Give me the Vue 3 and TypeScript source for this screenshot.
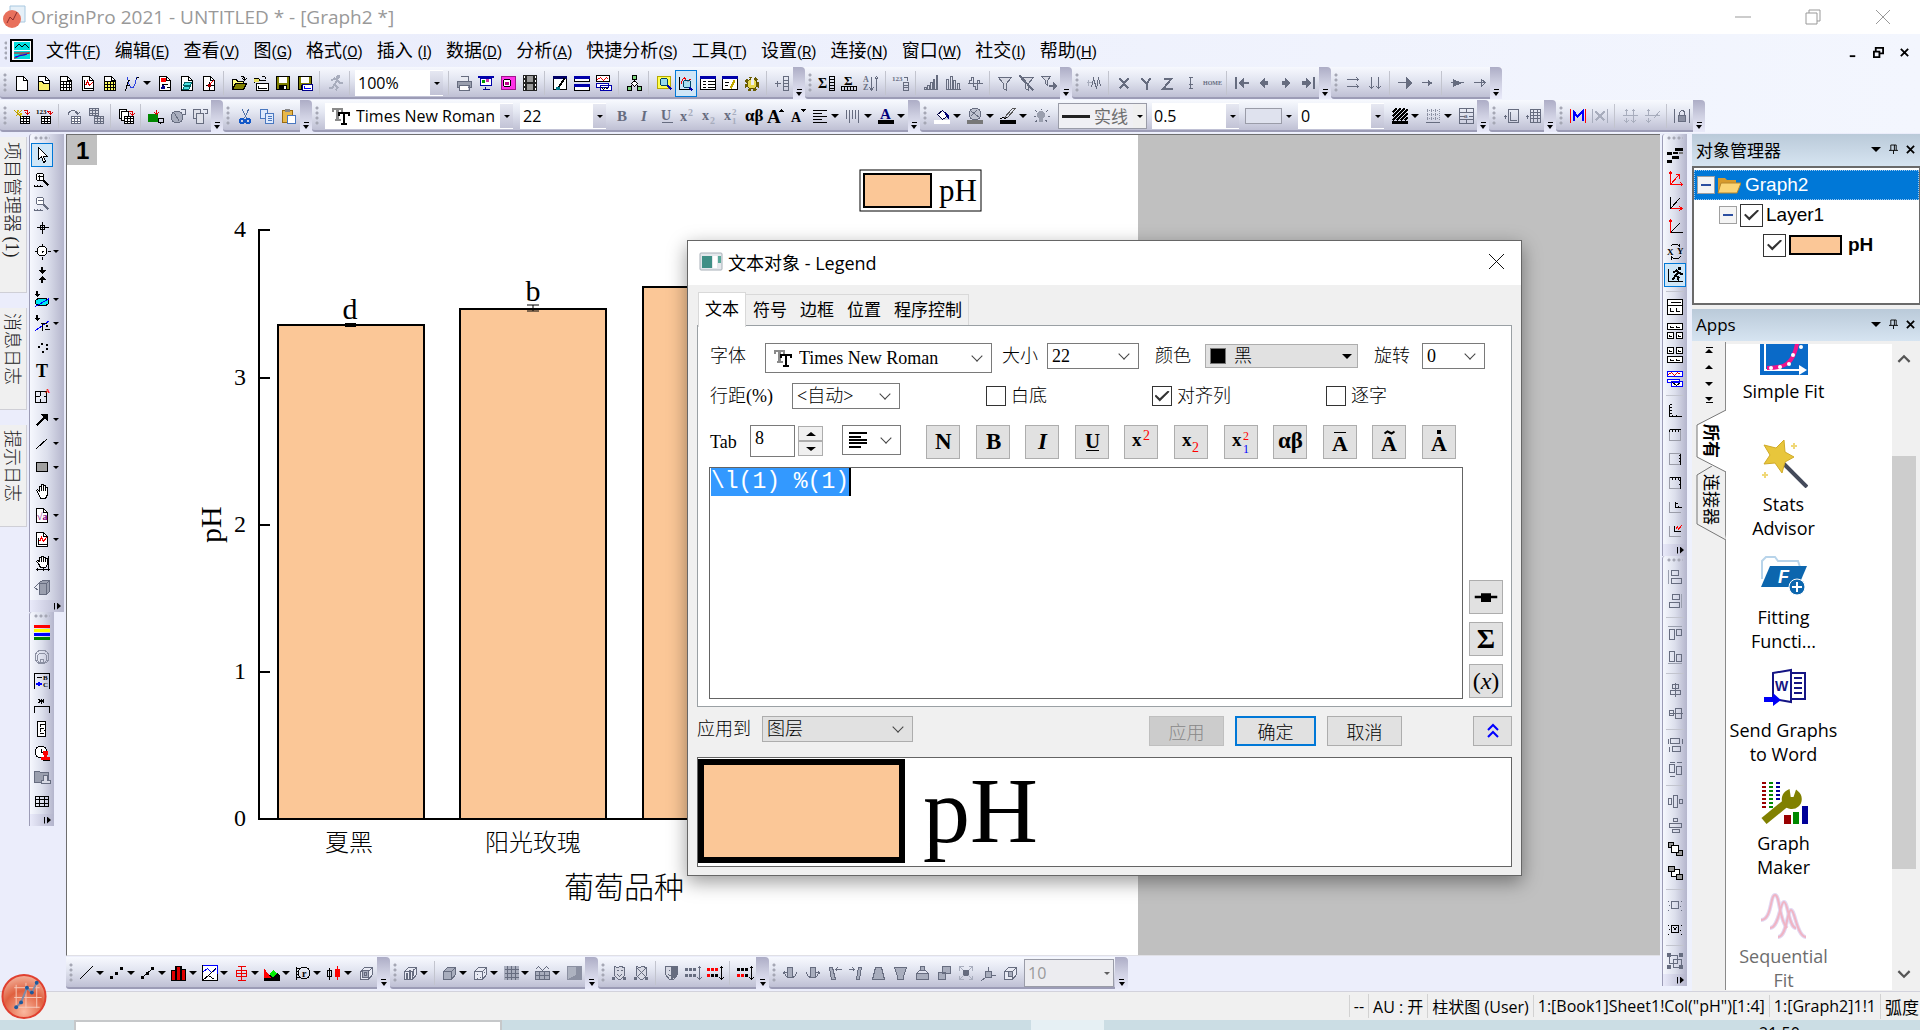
<script setup lang="ts">
import { onMounted, ref } from 'vue'

interface Item {
  kind: 'icon' | 'sep' | 'combo'
  id: string
  drop: boolean
  on: boolean
}

const G = '#666c7f'
const L = '#a8adbd'

const s = (d: string, c = '#000', w = 1) =>
  `<path d="${d}" fill="none" stroke="${c}" stroke-width="${w}" transform="translate(.5 .5)"/>`
const f = (d: string, c = '#000') => `<path d="${d}" fill="${c}"/>`
const b = (d: string, c: string, k = '#000') =>
  `<path d="${d}" fill="${c}" stroke="${k}" transform="translate(.5 .5)"/>`
const t = (x: number, y: number, size: number, text: string, c = '#000', extra = 'font-weight="bold"') =>
  `<text x="${x}" y="${y}" font-size="${size}" fill="${c}" font-family="Liberation Serif, serif" ${extra}>${text}</text>`

const page = b('M2 1h7l4 4v10H2z', '#fff') + s('M9 1v4h4')
const cube = b('M2 6l4-4h8v7l-4 5H2z', L, G) + s('M2 6h8v8M10 6l4-4', G)
const cubeOutline = b('M2 6l4-4h8v7l-4 5H2z', '#e8eaf4', G) + s('M2 6h8v8M10 6l4-4', G)
const sheet = (x: number, y: number, c: string, bg = '#fff') =>
  b(`M${x} ${y}h9v7h-9z`, bg, c) + s(`M${x} ${y + 2}h9M${x} ${y + 5}h9M${x + 3} ${y}v7M${x + 6} ${y}v7`, c)
const magnify = (c: string) =>
  `<circle cx="6" cy="6" r="4" fill="#fff" stroke="${c}"/>` + s('M9 9l5 5', c, 2) + s('M0 15v-2M3 15v-2M6 15v-2M0 15h8', c)
const floppy = b('M1 1h13v13H1z', '#808000') + f('M4 2h8v6H4z', '#fff') + f('M4 10h8v5H4z') + f('M9 11h2v3H9z', '#fff')
const folderOpen = b('M1 13V4h4l1 2h6v2', '#ffff80') + b('M1 14l3-6h11l-3 6z', '#808000') + s('M9 2c2-2 4-1 4 2M11 3l2 2 2-2')
const bars = (c: string) => s('M0 14h14M1 14v-2h2v2M4 14v-4h2v4M7 14V7h2v7M10 14V4h1v10M13 14V0h1v14', c)
const align = (c: string) => f('M1 2h14v1H1zM1 5h9v1H1zM1 8h14v1H1zM1 11h9v1H1zM1 14h14v1H1z', c)
const boxAxes = b('M0 0h15v15H0z', '#fff') + s('M3 3h10M3 8v4h3M9 8v4h3M0 6h15')
const panels = (up: boolean) =>
  up
    ? b('M0 0h15v6H0z', '#fff') + s('M3 2v2h3M9 2v2h3') + b('M0 9h6v6H0zM9 9h6v6H9z', '#fff') + s('M2 11v2h2M11 11v2h2')
    : b('M0 0h6v6H0zM9 0h6v6H9z', '#fff') + s('M2 2v2h2M11 2v2h2') + b('M0 9h15v6H0z', '#fff') + s('M3 11v2h3M9 11v2h3')
const axes = (solid: string) => s('M2 2h11v11H2z', '#9a9ca8') + s(solid, '#000', 1)
const runner = (c: string) => s('M4 5l3-2 3 2-3 4 3 3-2 3M7 9l-2 3H1M10 5l2 2h3', c, 2) + `<circle cx="11" cy="2" r="2" fill="${c}"/>`

const icons: Record<string, string> = {
  new: page,
  newfolder: page + b('M2 6h4l1 2h6v7H2z', '#f8ee6a'),
  newbook: page + s('M2 6h11M2 9h11M2 12h11M5 6v9M8 6v9M11 6v9'),
  newgraph: page + s('M4 4v9h8') + s('M5 10l2-4 2 4 3-3', '#e00000'),
  newmatrix: page + b('M2 6h11v9H2z', '#ffff60') + s('M2 9h11M2 12h11M5 6v9M8 6v9M11 6v9'),
  func: s('M3 2c2 14 7 14 9 0', '#2a3fe0') + s('M0 15c3 0 2-10 5-10M1 10h4M12 3l3-2'),
  layout: page + f('M4 3h5v4H4z', '#f00') + f('M5 9h2v2H5zM4 12l2-2 2 2v2H4z', '#008') + s('M4 9h6M9 12h3'),
  notes: page + b('M5 7h7l-1 3H4zM5 11h6l-2 3H3z', '#4ce0e0', '#066'),
  newfit: page + s('M4 10h8M8 6v8') + s('M8 9l4-4', '#f00') + f('M7 9h3v3H7z', '#a00'),
  open: folderOpen,
  opent: s('M1 7V3h4l1 2h6') + s('M9 1c2-1 3 0 3 2') + b('M3 8h12v7H3z', '#fff') + s('M5 10v3h8') + f('M1 4h5v3H1z', '#e8e060'),
  save: floppy,
  savet: floppy + b('M5 9h10v6H5z', '#fff', '#008') + s('M7 10v3h6', '#00f'),
  run: runner(L),
  print: f('M4 1h8v5H4z', '#e8eaf2') + b('M1 6h14v6H1z', '#9a9fae', G) + f('M4 10h8v5H4z', '#fff') + s('M4 1h8v4M3 10h10v5H3z', G),
  slide: f('M0 1h16v2H0z', '#00a') + b('M2 3h11v7H2z', '#fff', '#00a') + f('M4 5h3v3H4z', '#090') + f('M8 4h3v3H8z', '#c3a') + s('M7 11v2M4 14h7', '#008'),
  video: b('M1 1h14v13H1z', '#ff32e8', '#a0148c') + '<circle cx="7" cy="8" r="4" fill="#fff" stroke="#000"/>' + f('M5 7h4v3H5z', '#c0008c'),
  film: f('M1 0h14v16H1z', '#222') + f('M5 1h6v6H5zM5 9h6v6H5z', '#999') + f('M2 1h1v2H2zM2 5h1v2H2zM2 9h1v2H2zM2 13h1v2H2zM13 1h1v2h-1zM13 5h1v2h-1zM13 9h1v2h-1zM13 13h1v2h-1z', '#fff'),
  pen: b('M1 2h13v12H1z', '#fff') + f('M1 1h14v3H1z', '#006') + s('M12 3l-6 9', '#000', 2) + f('M4 12h4v3H4z', '#078'),
  rows: b('M0 1h15v5H0zM0 9h15v6H0z', '#fff') + f('M0 1h16v3H0zM0 9h16v3H0z', '#00a'),
  cascade: b('M0 0h13v6H0z', '#fff') + s('M1 4l3-2 3 3 3-3 2 2', '#e00') + b('M0 8h12v4H0zM4 10h11v5H4z', '#fff', '#00a') + s('M5 12l2 2 2-2 3 2'),
  org: b('M6 0h4v4H6zM1 11h4v4H1zM11 11h4v4h-4z', '#7ed67e') + b('M8 5l3 3-3 3-3-3z', '#fff') + s('M8 3v3M6 9l-3 3M10 9l3 3'),
  magbook: b('M1 1h13v12H1z', '#ffff50', '#b5a800') + '<circle cx="8" cy="7" r="4" fill="#9de" stroke="#046"/>' + s('M11 10l4 4', '#00a', 2),
  maggraph: s('M1 1v13h13') + s('M3 9c1-8 3-8 5-4s3-3 5-1', '#e00') + '<circle cx="9" cy="9" r="4" fill="#9de" fill-opacity=".7" stroke="#046"/>' + s('M11 12l3 3', '#00a', 2),
  list: b('M0 1h15v13H0z', '#fff') + f('M0 1h16v3H0z', '#00a') + s('M2 6h3M7 6h7M2 9h3M7 9h7M2 12h3M7 12h7'),
  script: b('M0 1h15v13H0z', '#fff') + f('M0 1h16v3H0z', '#00a') + s('M2 7h4M2 10h3') + s('M12 5l-4 8', '#c0a800', 2),
  gear: '<circle cx="8" cy="9" r="5" fill="#e8d850" stroke="#554a00"/><circle cx="8" cy="9" r="6" fill="none" stroke="#6a5c00" stroke-width="3" stroke-dasharray="3 2"/>' + f('M7 3h3v7H7z', '#eee'),
  addcol: s('M0 8h6M3 5v6', G) + s('M9 1h5v14H9zM9 5h5M9 8h5M9 11h5', G),
  sumcol: t(-1, 13, 14, 'Σ') + s('M10 1h5v14h-5zM10 4h5M10 7h5M10 10h5M10 13h5'),
  sumrow: t(3, 10, 13, 'Σ') + s('M0 11h15v4H0zM3 11v4M6 11v4M9 11v4M12 11v4'),
  sort: t(0, 7, 8, 'A', G) + t(0, 15, 8, 'Z', G) + s('M8 1v13M6 12l2 3 2-3M13 15V2M11 4l2-3 2 3', G),
  rank: t(-1, 6, 7, '123', G) + s('M10 2h4v3M10 7h5v8h-5zM10 10h5M10 12h5', G),
  bar1: bars(G),
  bar2: s('M0 14h15M1 14V4h2v10M5 14V1h2v13M8 14V5h2v9M12 14V8h2v6', G),
  bar3: s('M0 8h15M2 8V5h2V2h2v9h2v3h2V5h2v3', G),
  filter: b('M1 2h13L9 8v7l-3-2V8z', '#d7d9e4', G),
  filterx: b('M1 2h13L9 8v7l-3-2V8z', '#d7d9e4', G) + s('M0 0l14 15', G, 2),
  filterr: b('M0 1h9L6 5v5L4 8V5z', '#d7d9e4', G) + f('M8 10h4V7l4 4-4 4v-3H8z', G),
  peak: s('M0 7h5M2 4v6', L) + s('M5 12l2-9 3 10 2-11 2 9', G),
  X: s('M3 3l9 10M12 3L3 13', G, 2),
  Y: s('M3 3l5 5 4-5M8 8v6', G, 2),
  Z: s('M3 3h8L3 13h9', G, 2),
  I: s('M8 2v11M6 2h4M6 13h4M6 9h4', G),
  home: t(-1, 10, 6, 'HOME', G),
  first: f('M1 2h2v12H1zM10 3v10L4 8z', G) + f('M10 7h5v2h-5z', G),
  prev: f('M9 3v10L3 8zM9 6h3v4H9z', G),
  next: f('M7 3v10l6-5zM4 6h3v4H4z', G),
  last: f('M6 3v10l6-5zM13 2h2v12h-2zM2 6h4v4H2z', G),
  hh: s('M1 4h12M11 2l2 2-2 2M1 11h12M11 9l2 2-2 2', G),
  vv: s('M4 1v12M2 11l2 2 2-2M11 1v12M9 11l2 2 2-2', G),
  ar1: s('M0 7h10', G, 1) + f('M9 2v12l6-6z', G),
  ar2: s('M2 7h9', G) + f('M9 5v6l5-3z', G),
  ar3: s('M1 7h13', G) + f('M4 4v8l9-4z', G),
  ar4: s('M2 7h12M10 4v7l4-4z', G),
  wand: sheet(6, 8, '#000') + s('M1 8l6-6M0 2l8 7', '#c0a000') + f('M3 2h2v2H3zM6 5h2v2H6z', '#d8c000') + s('M9 2h4v3M11 4l2 2 2-2', '#d00'),
  imp: sheet(5, 8, '#000') + t(0, 6, 7, '123') + s('M10 3h4v3M12 4l2 2 2-2', '#d00'),
  re1: sheet(5, 8, G) + s('M2 6c0-5 9-5 9 0M9 4l2 2 2-2', G),
  re2: sheet(1, 0, G, '#d7d9e4') + sheet(6, 8, G, '#d7d9e4'),
  batch: b('M1 1h7v9H1z', '#fff') + b('M3 3h7v9H3z', '#fff') + sheet(6, 8, '#000') + s('M10 3h4v4M12 5l2 2 2-2', '#d00'),
  plug: f('M0 6h10v8H0z', '#080') + s('M8 1v5M6 4l2 2 2-2', '#d00') + s('M10 10h5v4h-5zM12 14v1'),
  globe2: '<circle cx="7" cy="9" r="6" fill="#a8adbd" stroke="#666c7f"/>' + s('M10 1h5v5h-3M4 5l5 8', G),
  pages: b('M1 1h7v9H1z', '#dfe1ea', G) + b('M4 5h7v10H4z', '#dfe1ea', G) + s('M10 1h5v4h-3', G),
  cut: s('M5 1l4 9M11 1L7 10', '#4b6ea8') + '<circle cx="5" cy="13" r="2" fill="none" stroke="#1459c8" stroke-width="2"/><circle cx="11" cy="13" r="2" fill="none" stroke="#1459c8" stroke-width="2"/>',
  copy: b('M1 1h7v9H1z', '#dfeafc', '#4a78c0') + b('M6 5h8v10H6z', '#dfeafc', '#4a78c0') + s('M8 8h4M8 10h4M8 12h4', '#4a78c0'),
  paste: b('M1 2h10v12H1z', '#e8b84a', '#9a6b10') + f('M4 1h5v3H4z', '#888') + b('M6 7h8v8H6z', '#fff', '#4a78c0'),
  B: t(3, 13, 15, 'B', G),
  It: t(5, 13, 15, 'I', G, 'font-weight="bold" font-style="italic"'),
  U: t(3, 12, 14, 'U', G) + s('M3 14h11', G),
  sup: t(0, 13, 14, 'x', G) + t(8, 8, 10, '2', L),
  sub: t(0, 12, 14, 'x', G) + t(8, 16, 10, '2', L),
  supsub: t(0, 12, 14, 'x', G) + t(8, 7, 9, '2', L) + t(8, 16, 9, '1', L),
  ab: t(-1, 13, 17, 'αβ'),
  Abig: t(-1, 15, 19, 'A') + f('M11 4h5l-3-3z'),
  Asmall: t(1, 14, 14, 'A') + f('M11 1h5l-3 3z'),
  align: align('#000'),
  vert: s('M1 1v9M4 1v13M7 1v9M10 1v9M13 1v13', G),
  Acol: t(2, 11, 15, 'A', '#00007a') + f('M0 12h16v4H0z'),
  bucket: b('M3 6l5-4 6 5-6 4z', '#fff', '#000040') + f('M9 3l6 4v5z', '#00007a') + f('M0 12h16v4H0z', '#fff'),
  globe: '<circle cx="8" cy="6" r="6" fill="#bfc3d0" stroke="#666c7f"/>' + s('M4 3l8 6M3 8l6-6', G) + f('M0 12h16v4H0z', '#777'),
  linec: s('M4 9l8-9 3 0-8 9z', '#555') + s('M0 10c4-2 3 1 7-1') + f('M0 12h16v4H0z'),
  bulb: '<circle cx="8" cy="7" r="4" fill="#9a9fae"/>' + f('M6 10h4v4H6z', '#9a9fae') + s('M8 0v1M2 2l2 2M14 2l-2 2M0 8h2M14 8h2M2 13l2-1M14 13l-2-1', G),
  hatch: s('M0 4l4-4M0 8L8 0M0 12L12 0M4 12L15 1M8 12l7-7M12 12l3-3', '#000', 2) + f('M0 13h16v3H0z'),
  gridd: '<path d="M2 2h12M2 6h12M2 10h12M2 1v11M6 1v11M10 1v11M14 1v11" stroke="#8b90a2" stroke-dasharray="1 1" fill="none"/>' + f('M1 14h14v1H1z', G),
  cellm: s('M1 0h14v15H1zM1 4h14M1 11h14M8 0v4M8 11v4M1 8h5M10 8h5', G) + t(6, 10, 7, 'a', G),
  addaxes: s('M0 8h3M2 6v4M5 1h10v13H5zM7 3v9h6', G),
  addgrid: s('M0 8h3M2 6v4M5 1h10v13H5zM5 4h10M5 7h10M5 10h10M8 1v13M12 1v13', G),
  M: f('M0 1h1v14H0zM15 1h1v14h-1z', '#f00') + s('M3 12V3l4 5 5-5v9', '#00f', 2),
  Mx: f('M0 1h1v14H0zM15 1h1v14h-1z', L) + s('M3 3l9 9M12 3l-9 9', L, 2),
  mv1: s('M4 1v5M2 3l2-2 2 2M4 9v5M2 12l2 2 2-2M0 7h15M11 1v13M9 3l2-2 2 2M9 12l2 2 2-2', L),
  mv2: s('M4 1v5M2 3l2-2 2 2M4 9v5M2 12l2 2 2-2M0 7h15M9 10l6-7', L),
  lock: f('M0 1h1v14H0zM15 1h1v14h-1z', G) + b('M4 7h7v6H4z', '#8b90a2', G) + s('M5 7V4l2-2h2l1 2v3', G),
  arrow: b('M4 0v12l3-3 2 6 2-1-2-5h4z', '#fff'),
  zoomin: magnify('#000') + s('M3 5h5M5 3v5'),
  zoomout: magnify(G) + s('M3 5h5', G),
  cross: s('M8 2v12M2 8h12M6 6h4v4H6z'),
  target: '<circle cx="8" cy="8" r="5" fill="#fff" stroke="#000"/>' + s('M8 0v3M8 13v3M0 8h3M13 8h3M8 7v2M7 8h2'),
  vpair: f('M7 0h2v3h3L8 7 4 3h3zM7 16h2v-3h3L8 9l-4 4h3z'),
  mask: '<ellipse cx="8" cy="11" rx="7" ry="4" fill="#00e6f0" stroke="#000"/>' + s('M1 15L15 7', '#00f') + f('M2 0h2v3h2L3 6 0 3h2z'),
  mask2: s('M1 15L15 5', '#00f') + s('M6 8h6M8 8v7M10 14h5') + f('M2 0h2v3h2L3 6 0 3h2zM12 10h2v2h-2z'),
  dots: f('M4 7h2v2H4zM7 4h2v2H7zM12 5h2v2h-2zM12 9h2v2h-2zM8 12h2v2H8z'),
  T: t(2, 14, 18, 'T'),
  zoomT: s('M1 4h11v11H1zM1 9h4M9 9h3M6 4v4M6 11v4') + t(11, 6, 7, 'A', '#f00'),
  arrl: s('M2 14L11 5', '#000', 2) + f('M6 3h8v8z'),
  line: s('M2 13L13 3'),
  rect: b('M2 3h11v9H2z', '#a0a0a0'),
  hand: b('M4 10L2 7l1-1 2 2V3h2v4-6h2v6-5h2v5-3h2v7l-2 4H6z', '#fff'),
  eq: page + t(3, 13, 10, '√a', '#800080'),
  miniG: page + s('M4 6v7h8') + s('M5 10l2-4 2 4 3-4', '#f00'),
  handx: b('M4 8L2 6l1-1 2 1V2h2v4-5h2v5-4h2v4-3h2v6l-2 3H6z', '#fff') + s('M1 14h14M14 0v15M3 12v3M9 12v3'),
  cubeg: b('M5 3l3-2h7v11l-3 3H5z', '#9a9fae', G) + s('M5 4h7v11M12 4l3-3M4 4L0 8l4 3', G),
  stripes: f('M0 0h16v3H0z', '#f00') + f('M0 4h16v3H0z', '#ff0') + f('M0 8h16v3H0z', '#00f') + f('M0 12h16v3H0z', '#008000'),
  rings: '<g fill="none" stroke="#8b90a2"><circle cx="8" cy="8" r="7"/><circle cx="8" cy="9" r="5"/><circle cx="8" cy="12" r="2"/></g>',
  legend: s('M0 15V0h15v15M2 4h5') + t(9, 7, 7, 'B') + t(9, 14, 7, 'C') + f('M2 10h6v2H2zM4 9h2v4H4z', '#00f'),
  star: s('M0 15V9h15v6M7 1v5M4 2l6 3M10 2L4 5'),
  scale: b('M3 0h8v15H3z', '#fff') + s('M5 3h4M6 2v3M5 7h4M6 6v4M5 12h4M9 3h2M9 9h2'),
  stamp: '<circle cx="7" cy="7" r="6" fill="#fff" stroke="#000"/>' + s('M7 3v4h3') + f('M9 6h5v4h-1v2h3v3H7v-3h3v-2H9z', '#f00') + s('M8 15h7'),
  stampg: b('M0 2h5l1 1h8v10H0z', '#9a9fae', G) + b('M9 6h4v5h3v3H7v-3h2z', '#d7d9e4', G),
  table: s('M1 3h13v10H1zM1 6h13M1 10h13M5 3v10M10 3v10'),
  black: f('M8 1h8v3H8zM0 5h5v3H0zM6 5h5v2H6zM5 9h7v3H5zM0 13h5v3H0z') + f('M12 5h4v2h-4z', '#777'),
  axxy: s('M3 0v13h12M1 3l2-3 2 3M13 11l2 2-2 2M3 13L11 4M8 3h4v4', '#f00'),
  axx: s('M3 1v12M3 13L12 3') + s('M3 13h12M12 11l3 2-3 2', '#f00'),
  axy: s('M3 13h12M3 13L12 4') + s('M3 13V0M1 3l2-3 2 3', '#f00'),
  swap: t(0, 12, 9, 'X') + t(10, 11, 9, 'Y') + s('M3 3c2-3 7-3 9 0V0M13 13c-2 3-7 3-9 0v3'),
  runax: s('M1 1v13h14') + s('M6 5l3-2 2 2-3 3 3 2-1 3M8 8l-2 3H4M11 5l2 1h2', '#000', 2) + f('M11 0h3v3h-3z'),
  lay1: boxAxes,
  lay2: panels(true),
  lay3: panels(false),
  lay4: b('M0 0h15v5H0z', '#fff', '#00f') + s('M1 3l3-2 3 3 3-3 3 2', '#e00') + b('M0 8h12v3H0zM4 10h11v5H4z', '#fff', '#00f') + s('M5 11l4 3 4-3'),
  axL: s('M2 1v12h12M2 1h2M2 4h2M2 7h2M2 10h2M5 13v-2M9 13v-2'),
  axT: axes('M2 2h11M2 2v2M5 2v2M8 2v2M11 2v2'),
  axR: axes('M13 2v11M11 4h2M11 7h2M11 10h2'),
  axA: axes('M2 2h11v11M5 2v2M8 2v2M11 2v2M11 5h2M11 9h2'),
  axI: s('M2 2v11h11', '#9a9ca8') + s('M8 2v6h6M8 4h2M11 8V6'),
  axJ: s('M2 2v11h11', '#9a9ca8') + s('M7 2v6h6') + s('M8 6l2-3 1 3 3-4', '#f00'),
  alL: '<path d="M1 1h1v14h-1z" fill="#9a9fae"/>' + s('M4 1h7v5H4zM4 9h10v5H4z', G),
  alR: '<path d="M14 1h1v14h-1z" fill="#9a9fae"/>' + s('M5 1h7v5H5zM2 9h10v5H2z', G),
  alT: '<path d="M1 1h14v1H1z" fill="#9a9fae"/>' + s('M2 4h5v10H2zM9 4h5v6H9z', G),
  alB: '<path d="M1 14h14v1H1z" fill="#9a9fae"/>' + s('M2 2h5v10H2zM9 5h5v7H9z', G),
  cV: s('M5 3h6v4H5zM3 9h10v4H3zM8 1v14', G),
  cH: s('M2 5h4v5H2zM8 3h6v10H8zM1 8h14', G),
  szH: s('M3 1h9v5H3zM5 9h8v5H5zM1 1v5M15 1v5M2 9v5', G),
  szV: s('M2 3h5v8H2zM9 5h5v8H9zM2 1h5M9 1h5M2 15h5', G),
  dH: s('M1 5h3v6H1zM6 2h4v12H6zM12 6h3v4h-3z', G),
  dV: s('M6 1h4v3H6zM2 6h12v4H2zM5 12h7v3H5z', G),
  front: b('M1 1h5v5H1zM9 9h6v5H9z', '#999') + b('M4 4h7v7H4z', '#fff'),
  back: b('M4 4h8v7H4z', '#fff') + b('M1 1h6v5H1zM9 9h6v5H9z', '#999'),
  gr1: s('M4 4h7v7H4zM1 3v1M2 7v1M1 12v1M14 3v1M13 8v1M14 12v1', G),
  gr2: s('M4 4h7v7H4zM6 6l3 3M9 6L6 9M1 3v1M2 7v1M1 12v1M14 3v1M13 8v1M14 12v1'),
  grp: s('M2 2h8v8H2zM6 6h8v8H6z', G) + f('M0 0h4v4H0zM12 0h4v4h-4zM0 12h4v4H0zM12 12h4v4h-4z', G),
  pline: s('M1 14L14 1'),
  pscat: f('M1 11h3v3H1zM6 7h3v3H6zM11 2h3v3h-3z'),
  plsc: f('M1 11h3v3H1zM6 7h3v3H6zM11 2h3v3h-3z') + s('M2 12L12 3'),
  pbar: f('M0 5h6v11H0zM4 1h7v15H4zM9 4h6v12H9z') + f('M1 6h3v9H1zM6 2h3v13H6zM11 5h3v10h-3z', '#e00000'),
  pmulti: b('M0 0h15v15H0z', '#fff', '#000') + s('M0 0h15v8M1 6l4-3 4 4 5-4', '#00f') + s('M1 14l5-4 6 4M6 10L13 3'),
  pbox: s('M8 1v14M4 1h8M4 15h8M3 5h10v6H3zM3 8h10', '#e00'),
  parea: f('M0 4l5 6 5-4 6 4v6H0z') + f('M0 3l7 10H0z', '#f00') + f('M5 9l4-4 4 4-4 3z', '#0e0'),
  pr: s('M1 1v13M1 3h2M1 6h2M1 9h2M1 12h2') + '<circle cx="9" cy="8" r="6" fill="none" stroke="#000"/>' + t(7, 12, 10, 'r'),
  pcand: s('M3 2v12M1 5h4v6H1z') + f('M9 4h5v8H9zM11 1h1v14h-1z', '#f00'),
  p3d: cubeOutline + b('M4 5h6v7H4z', L, G) + s('M6 7h2v3H6z', G),
  c3a: cubeOutline + f('M4 8h2v6H4zM7 5h2v9H7zM11 4h1v7h-1z', G),
  c3b: cube,
  c3c: cubeOutline + s('M5 8v1M8 11v1M12 6v1M5 12v1', G),
  cgrid: f('M1 1h15v14H1z', L) + s('M1 4h14M1 8h14M1 12h14M4 0v14M8 0v14M12 0v14', G),
  cwave: f('M1 6h15v9H1z', L) + s('M1 4l3-3 4 4 4-4 3 3M1 6h14v8H1zM1 10h14M5 6v8M10 6v8', G),
  cfill: f('M1 1h15v14H1z', '#8b90a2') + f('M2 2h8v8L2 14z', '#adb2c0'),
  m1: b('M3 1l3 1 3-1 4 1v8l-4 4H7l-4-4z', '#d7d9e4', G) + s('M5 5h2M9 5h2M6 9l2 2 2-2', G) + f('M1 12h3v3H1zM12 12h3v3h-3z', G),
  m2: b('M3 1l3 1 3-1 4 1v8l-4 4H7l-4-4z', '#d7d9e4', G) + s('M3 2l10 10M13 2L3 12', G) + f('M1 12h3v3H1zM12 12h3v3h-3z', G),
  m3: b('M2 1h12v8l-4 5H6L2 9z', '#d7d9e4', G) + f('M8 1h6v8l-4 5H8z', G) + s('M5 5h1M5 9l3 2', G),
  r1: f('M0 3h3v3H0zM4 3h3v3H4zM8 3h3v3H8zM0 9h3v3H0zM4 9h3v3H4zM8 9h3v3H8z', G) + s('M14 1v13M12 3l2-2 2 2M12 12l2 2 2-2', G),
  r2: f('M0 3h3v3H0zM4 3h3v3H4zM0 9h3v3H0zM8 3h3v3H8z', '#f00') + f('M4 9h3v3H4zM8 9h3v3H8z') + s('M14 1v13M12 3l2-2 2 2M12 12l2 2 2-2'),
  r3: f('M0 3h3v3H0zM4 3h3v3H4zM8 3h3v3H8z') + f('M0 9h3v3H0zM4 9h3v3H4z', '#f00') + f('M8 9h3v3H8z') + s('M14 1v13M12 3l2-2 2 2M12 12l2 2 2-2'),
  rotL: b('M5 2h5v10H5z', L, G) + s('M2 7c1 7 11 7 12 0M0 9l2-3 3 2', G),
  rotR: b('M6 2h5v10H6z', L, G) + s('M14 7c-1 7-11 7-12 0M16 9l-2-3-3 2', G),
  tiL: b('M3 2h3l3 12H5z', L, G) + s('M9 4h6M11 2L9 4l2 2', G),
  tiR: b('M10 2h3l-2 12H8z', L, G) + s('M0 4h6M4 2l2 2-2 2', G),
  trU: b('M5 2h6l3 12H2z', L, G),
  trD: b('M2 2h12l-3 9v3H5v-3z', L, G),
  zo: b('M6 1h4v4H6zM2 8h12v6H2z', L, G) + s('M5 5L2 8M11 5l3 3', G),
  zi: b('M6 1h8v7H6zM2 7h7v7H2z', L, G),
  fit: f('M5 5h6v6H5z', G) + s('M1 1l4 4M14 1l-4 4M1 14l4-4M14 14l-4-4M1 5V1h4M14 5V1h-4M1 10v4h4M14 10v4h-4', L),
  res: b('M5 6h6v6H5z', L, G) + s('M8 6V1M11 10h4M5 12l-4 3', G),
  res2: cubeOutline + b('M6 6h4v5H6z', L, G),
  dash: f('M-1 7h18v2H-1zM4 5h8v7H4z'),
}

function parse(spec: string): Item[] {
  return spec.split(' ').map((k) => {
    if (k === '|') return { kind: 'sep', id: k, drop: false, on: false }
    if (k.startsWith('#')) return { kind: 'combo', id: k.slice(1), drop: false, on: false }
    return { kind: 'icon', id: k.replace(/[>*]/g, ''), drop: k.includes('>'), on: k.includes('*') }
  })
}

const rows = [
  [
    'new newfolder newbook newgraph newmatrix func> layout notes newfit | open opent save savet | run | #zoom | print slide video film | pen rows cascade | org | magbook maggraph* list script gear | addcol',
    'sumcol sumrow sort | rank | bar1 bar2 bar3 | filter filterx filterr',
    'peak | X Y Z I home | first prev next last',
    'hh vv | ar1 ar2 | ar3 ar4',
  ].map(parse),
  [
    'wand imp | re1 re2 | batch | plug globe2 pages',
    'cut copy paste',
    '#font #size B It U sup sub supsub ab Abig Asmall align> vert> Acol>',
    'bucket> globe> linec> bulb #linestyle #width #swatch #gap hatch> gridd> cellm',
    'addaxes addgrid',
    'M Mx | mv1 mv2 | lock',
  ].map(parse),
]

const bottomGroups = [
  'pline> pscat> plsc> pbar> pmulti> pbox> parea> pr> pcand> p3d',
  'c3a> | c3b> c3c> cgrid> cwave> cfill',
  'm1 m2 | m3 r1 r2 | r3',
  'rotL rotR tiL tiR trU trD zo zi fit res res2 #angle',
].map(parse)

const leftGroups = [
  'arrow* zoomin zoomout cross target> vpair mask> mask2> dots T zoomT arrl> line> rect> hand eq> miniG> handx cubeg',
  'stripes rings legend star scale stamp stampg table',
].map(parse)

const rightGroups = [
  'black axxy axx axy swap runax* | lay1 lay2 lay3 lay4 | axL axT axR axA axI axJ',
  'alL alR | alT alB | cV cH | szH szV | dH dV front back | gr1 gr2 | grp',
].map(parse)

const combos: Record<string, string> = {
  zoom: '100%', font: 'Times New Roman', size: '22', linestyle: '实线', width: '0.5', swatch: '', gap: '0', angle: '10',
}

const menus: [string, string][] = [
  ['文件', 'F'], ['编辑', 'E'], ['查看', 'V'], ['图', 'G'], ['格式', 'O'], ['插入 ', 'I'], ['数据', 'D'], ['分析', 'A'],
  ['快捷分析', 'S'], ['工具', 'T'], ['设置', 'R'], ['连接', 'N'], ['窗口', 'W'], ['社交', 'I'], ['帮助', 'H'],
]

const tabs = ['文本', '符号', '边框', '位置', '程序控制']

const formats = [
  { id: 'N', svg: t(2, 17, 23, 'N') },
  { id: 'B', svg: t(3, 17, 23, 'B') },
  { id: 'I', svg: t(6, 17, 23, 'I', '#000', 'font-weight="bold" font-style="italic"') },
  { id: 'U', svg: t(3, 16, 21, 'U') + f('M4 18h13v1H4z') },
  { id: 'sup', svg: t(1, 14, 19, 'x') + t(12, 8, 14, '2', '#f00', '') },
  { id: 'sub', svg: t(1, 14, 19, 'x') + t(11, 20, 14, '2', '#f00', '') },
  { id: 'supsub', svg: t(1, 14, 19, 'x') + t(12, 8, 12, '2', '#f00', '') + t(12, 21, 12, '1', '#00f', '') },
  { id: 'greek', svg: t(-2, 16, 23, 'αβ') },
  { id: 'bar', svg: t(2, 19, 22, 'A') + f('M4 0h12v1H4z') },
  { id: 'tilde', svg: t(2, 19, 22, 'A') + s('M5 1l3-2 4 2 3-2', '#000', 2) },
  { id: 'dot', svg: t(2, 19, 22, 'A') + f('M8-2h4v4H8z') },
]

const apps = [
  {
    lines: ['Simple Fit'],
    svg: '<path d="M0 0h48v48H0z" fill="#0a6ac8"/><path d="M5 0v43h38" fill="none" stroke="#fff" stroke-width="2"/><path d="M7 41c18 0 26-4 30-24l4-8" fill="none" stroke="#f0148c" stroke-width="4"/><path d="M39 38l8 5-8 5z" fill="#fff"/><g fill="#fff"><circle cx="11" cy="41" r="2"/><circle cx="20" cy="40" r="2"/><circle cx="29" cy="37" r="2"/><circle cx="33" cy="28" r="2"/><circle cx="41" cy="20" r="2"/></g>',
  },
  {
    lines: ['Stats', 'Advisor'],
    svg: '<path d="M24 24l23 23" stroke="#444a5a" stroke-width="4"/><path d="M24 0l1 12 9 5-9 5-3 11-7-10-11 1 6-9-6-10 12 3z" fill="#e8c63c" stroke="#d0aa28"/><path d="M34 3v6M31 6h6M5 32v6M2 35h6" stroke="#f0d878" stroke-width="2"/>',
  },
  {
    lines: ['Fitting', 'Functi...'],
    svg: '<path d="M2 26V8l4-4h9l3 4h20l2 6" fill="#fff" stroke="#b8d4ea" stroke-width="2"/><path d="M10 13h37l-9 21H1z" fill="#0c66ae"/><text x="18" y="30" font-family="Liberation Sans, sans-serif" font-size="18" font-weight="bold" font-style="italic" fill="#fff">F</text><circle cx="37" cy="34" r="8" fill="#0c66ae" stroke="#fff"/><path d="M37 29v10M32 34h10" stroke="#fff" stroke-width="2"/>',
  },
  {
    lines: ['Send Graphs', 'to Word'],
    svg: '<path d="M13 7l18-3v32l-18-3z" fill="#fff" stroke="#141484" stroke-width="2"/><path d="M32 7h13v26H32M34 12h8M34 17h8M34 22h8M34 27h8" fill="none" stroke="#141484" stroke-width="2"/><text x="15" y="25" font-family="Liberation Sans, sans-serif" font-size="14" font-weight="bold" fill="#141484">W</text><path d="M4 31h9v-4l8 7-8 6v-4H4z" fill="#0000f5"/>',
  },
  {
    lines: ['Graph', 'Maker'],
    svg: '<g fill="none" stroke-width="4" stroke-dasharray="2 2"><path d="M4 3v26" stroke="#900"/><path d="M11 3v26" stroke="#080"/><path d="M18 3v20" stroke="#009"/></g><path d="M4 42L26 24" stroke="#808000" stroke-width="8"/><path d="M37 14a8 8 0 1 1-9-1l1 7h6z" fill="#808000" stroke="#808000" stroke-width="4"/><path d="M24 36h7v9h-7z" fill="#900"/><path d="M33 33h6v12h-6z" fill="#080"/><path d="M42 27h6v18h-6z" fill="#009"/>',
  },
  {
    lines: ['Sequential', 'Fit'], dim: true,
    svg: '<g fill="none" stroke="#e2d8f2" stroke-width="4"><path d="M1 28c11 0 9-25 14-25s4 25 12 33"/><path d="M10 36c9 0 10-26 14-26s5 26 12 26"/><path d="M18 45c9 0 9-27 13-27s6 27 15 27"/></g><g fill="none" stroke="#f0b4c4" stroke-width="2"><path d="M1 28c11 0 9-25 14-25s4 25 12 33"/><path d="M10 36c9 0 10-26 14-26s5 26 12 26"/><path d="M18 45c9 0 9-27 13-27s6 27 15 27"/></g>',
  },
]

const ticks = [
  { label: '4', y: 230 }, { label: '3', y: 378 }, { label: '2', y: 525 }, { label: '1', y: 672 }, { label: '0', y: 819 },
]
const columns = [{ x: 278, y: 325 }, { x: 460, y: 309 }, { x: 643, y: 287 }, { x: 826, y: 340 }]

const source = ref('\\l(1) %(1)')
const editor = ref<HTMLTextAreaElement | null>(null)
onMounted(() => {
  editor.value?.focus()
  editor.value?.select()
})
</script>

<template>
  <div class="app">
    <header class="titlebar">
      <svg class="logo-sm" viewBox="0 0 24 24">
        <path d="M8 1h15v16H8z" fill="#e6f0f8" stroke="#a8c8e0" />
        <circle cx="10" cy="14" r="9" fill="#e8705c" />
        <path d="M5 18l3-6 3 3 4-8" fill="none" stroke="#8c2c2c" />
      </svg>
      <h1>OriginPro 2021 - UNTITLED * - [Graph2 *]</h1>
      <div class="winbtns">
        <button aria-label="min"><svg viewBox="0 0 16 16"><path d="M0 8h16" stroke="#999" /></svg></button>
        <button aria-label="restore"><svg viewBox="0 0 16 16"><path d="M1 4h11v11H1zM4 4V1h11v11h-3" fill="none" stroke="#999" /></svg></button>
        <button aria-label="close"><svg viewBox="0 0 16 16"><path d="M1 1l14 14M15 1L1 15" stroke="#999" /></svg></button>
      </div>
    </header>

    <nav class="menubar">
      <span class="grip" />
      <svg class="doc" viewBox="0 0 24 24">
        <path d="M1 1h21v21H1z" fill="#fff" stroke="#000" stroke-width="2" />
        <path d="M4 3h16v8H4zM4 12h16v8H4z" fill="#00dede" />
        <path d="M5 9l4-4 3 3 3-3 4 4" fill="none" stroke="#000" />
        <path d="M4 14h16M4 19c5 0 4-4 8-3s5-2 7-2" fill="none" stroke="#e00" />
        <path d="M5 18l12-3" stroke="#00f" />
      </svg>
      <button v-for="m in menus" :key="m[0]" class="menu">{{ m[0] }}<span>(<u>{{ m[1] }}</u>)</span></button>
      <div class="mdi">
        <svg viewBox="0 0 12 12"><path d="M3 10h6" stroke="#000" stroke-width="2" /></svg>
        <svg viewBox="0 0 12 12"><path d="M3 4V1h8v6H8M1 5h6v6H1z" fill="none" stroke="#000" stroke-width="2" /></svg>
        <svg viewBox="0 0 12 12"><path d="M2 2l8 8M10 2l-8 8" stroke="#000" stroke-width="2" /></svg>
      </div>
    </nav>

    <div v-for="(groups, r) in rows" :key="r" class="bar">
      <div v-for="(g, gi) in groups" :key="gi" class="group">
        <span class="grip" />
        <template v-for="(it, i) in g" :key="i">
          <span v-if="it.kind === 'sep'" class="sep" />
          <span v-else-if="it.kind === 'combo'" class="combo" :class="it.id">
            <svg v-if="it.id === 'font'" class="tt" viewBox="0 0 18 18">
              <path d="M0 1h11v4H9V3H7v9h2v2H3v-2h1V3H2v2H0z" fill="#8a8a8a" />
              <path d="M6 5h12v4h-2V7h-3v9h2v2H9v-2h2V7H8v2H6z" />
            </svg>
            <i v-if="it.id === 'linestyle'" class="stroke" />
            <select :aria-label="it.id"><option>{{ combos[it.id] }}</option></select>
            <span class="arr"><i class="tri" /></span>
          </span>
          <button v-else class="tool" :class="{ on: it.on }" :aria-label="it.id">
            <svg viewBox="0 0 16 16" v-html="icons[it.id]" /><i v-if="it.drop" class="tri" />
          </button>
        </template>
        <span class="cap"><i class="dash" /><i class="tri" /></span>
      </div>
    </div>

    <main class="body">
      <aside class="left">
        <div class="sidetabs">
          <button class="t1">项目管理器 (1)</button>
          <button>消息日志</button>
          <button>提示日志</button>
        </div>
        <div class="vstack">
          <div v-for="(g, gi) in leftGroups" :key="gi" class="vgroup" :class="{ wide: gi === 0 }">
            <span class="vgrip" />
            <template v-for="(it, i) in g" :key="i">
              <button class="vtool" :class="{ on: it.on }" :aria-label="it.id">
                <svg viewBox="0 0 16 16" v-html="icons[it.id]" /><i v-if="it.drop" class="tri" />
              </button>
            </template>
            <span class="vcap"><i class="side" /></span>
          </div>
        </div>
      </aside>

      <section class="centre">
        <div class="canvas">
          <div class="paper">
            <svg class="chart" viewBox="67 135 1071 821">
              <path d="M67 135h30v30H67z" fill="#c0c0c0" />
              <text x="76" y="159" class="sans">1</text>
              <g fill="#fbc797" stroke="#000" stroke-width="2">
                <rect v-for="c in columns" :key="c.x" :x="c.x" :y="c.y" width="146" :height="819 - c.y" />
              </g>
              <path d="M270 230H259V820M259 819H1050" fill="none" stroke="#000" stroke-width="2" />
              <g v-for="k in ticks" :key="k.label">
                <path :d="`M259 ${k.y}h11`" stroke="#000" stroke-width="2" />
                <text x="240" :y="k.y + 7" font-size="24" text-anchor="middle">{{ k.label }}</text>
              </g>
              <path d="M345 323h11v4h-11z" />
              <path d="M527 305h12M527 311h12M533 305v6" stroke="#000" />
              <text x="350" y="319" font-size="30" text-anchor="middle">d</text>
              <text x="533" y="301" font-size="30" text-anchor="middle">b</text>
              <text x="221" y="543" font-size="30" transform="rotate(-90 221 543)">pH</text>
              <text x="349" y="851" font-size="24" text-anchor="middle" class="cjk">夏黑</text>
              <text x="533" y="851" font-size="24" text-anchor="middle" class="cjk">阳光玫瑰</text>
              <text x="624" y="898" font-size="30" text-anchor="middle" class="cjk">葡萄品种</text>
              <rect x="860" y="170" width="121" height="41" fill="#fff" stroke="#000" />
              <rect x="864" y="174" width="67" height="33" fill="#fbc797" stroke="#000" stroke-width="2" />
              <text x="939" y="201" font-size="31">pH</text>
            </svg>
          </div>
        </div>
        <div class="bar lower">
          <div v-for="(g, gi) in bottomGroups" :key="gi" class="group">
            <span class="grip" />
            <template v-for="(it, i) in g" :key="i">
              <span v-if="it.kind === 'sep'" class="sep" />
              <span v-else-if="it.kind === 'combo'" class="combo" :class="it.id">
                <select :aria-label="it.id" disabled><option>{{ combos[it.id] }}</option></select>
                <span class="arr"><i class="tri" /></span>
              </span>
              <button v-else class="tool" :class="{ dd: it.drop }" :aria-label="it.id">
                <svg viewBox="0 0 16 16" v-html="icons[it.id]" /><i v-if="it.drop" class="tri" />
              </button>
            </template>
            <span class="cap"><i class="dash" /><i class="tri" /></span>
          </div>
        </div>
      </section>

      <div class="vstack right">
        <div v-for="(g, gi) in rightGroups" :key="gi" class="vgroup">
          <span class="vgrip" />
          <template v-for="(it, i) in g" :key="i">
            <span v-if="it.kind === 'sep'" class="vsep" />
            <button v-else class="vtool" :class="{ on: it.on }" :aria-label="it.id">
              <svg viewBox="0 0 16 16" v-html="icons[it.id]" />
            </button>
          </template>
          <span class="vcap"><i class="side" /></span>
        </div>
      </div>

      <aside class="panels">
        <div class="phead">
          <h2>对象管理器</h2><i class="tri" />
          <svg viewBox="0 0 10 12"><path d="M2 1h6v6M2 1v6M6 1v6M0 7h10M5 7v4" fill="none" stroke="#000" stroke-width="1" /></svg>
          <svg viewBox="0 0 10 12"><path d="M1 2l8 8M9 2l-8 8" stroke="#000" stroke-width="2" /></svg>
        </div>
        <div class="tree">
          <div class="node root">
            <span class="minus" />
            <svg class="folder" viewBox="0 0 24 18"><path d="M1 2h7l2 2h9v13H1z" fill="#d79a2c" /><path d="M4 7h20l-4 10H1z" fill="#fbd475" stroke="#b8862b" /></svg>
            Graph2
          </div>
          <div class="node layer"><span class="minus" /><input id="layer1" type="checkbox" checked /><label for="layer1">Layer1</label></div>
          <div class="node plot"><input id="plot1" type="checkbox" checked /><i class="sw" /><label for="plot1">pH</label></div>
        </div>
        <div class="phead apps-head">
          <h2>Apps</h2><i class="tri" />
          <svg viewBox="0 0 10 12"><path d="M2 1h6v6M2 1v6M6 1v6M0 7h10M5 7v4" fill="none" stroke="#000" /></svg>
          <svg viewBox="0 0 10 12"><path d="M1 2l8 8M9 2l-8 8" stroke="#000" stroke-width="2" /></svg>
        </div>
        <div class="apps">
          <div class="strip">
            <svg class="navs" viewBox="0 0 34 68">
              <path d="M14 5h7v1h-7zM17 7l4 4h-8zM17 23l4 4h-8zM13 40h8l-4 4zM13 55h8l-4 4zM14 60h7v1h-7z" />
            </svg>
            <button class="vt cur"><svg viewBox="0 0 30 62"><path d="M30 0L1 15v32l29 15" fill="#fff" stroke="#777" /></svg><b>所有</b></button>
            <button class="vt"><svg viewBox="0 0 30 74"><path d="M16 0L1 9v49l29 16" fill="#f0f0f0" stroke="#777" /></svg><span>连接器</span></button>
          </div>
          <div class="list">
            <div v-for="a in apps" :key="a.lines[0]" class="appitem" :class="{ dim: a.dim }">
              <svg viewBox="0 0 48 48" v-html="a.svg" />
              <span v-for="l in a.lines" :key="l">{{ l }}</span>
            </div>
          </div>
          <div class="scroll">
            <svg viewBox="0 0 12 8"><path d="M1 7l5-5 5 5" fill="none" stroke="#555" stroke-width="2" /></svg>
            <i />
            <svg viewBox="0 0 12 8"><path d="M1 1l5 5 5-5" fill="none" stroke="#555" stroke-width="2" /></svg>
          </div>
        </div>
      </aside>

      <section class="dialog" role="dialog">
        <div class="dtitle">
          <svg class="dicon" viewBox="0 0 24 20">
            <rect x="1" y="1" width="22" height="17" rx="1" fill="#e4e8ec" stroke="#a8b0b8" />
            <rect x="3" y="4" width="10" height="12" fill="#3f8f86" />
            <rect x="14" y="4" width="4" height="12" fill="#fff" /><rect x="19" y="4" width="3" height="7" fill="#5aa89a" />
          </svg>
          <h3>文本对象 - Legend</h3>
          <button aria-label="close"><svg viewBox="0 0 16 16"><path d="M0 0l16 16M16 0L0 16" stroke="#000" /></svg></button>
        </div>
        <div class="tabs"><button v-for="(x, i) in tabs" :key="x" :class="{ cur: i === 0 }">{{ x }}</button></div>
        <div class="panel">
          <div class="row r1">
            <label for="d-font" class="w55">字体</label>
            <span class="pick pfont">
              <svg class="tt" viewBox="0 0 18 18">
                <path d="M0 1h11v4H9V3H7v9h2v2H3v-2h1V3H2v2H0z" fill="#8a8a8a" />
                <path d="M6 5h12v4h-2V7h-3v9h2v2H9v-2h2V7H8v2H6z" />
              </svg>
              <select id="d-font"><option>Times New Roman</option></select><i class="chev" />
            </span>
            <label for="d-size" class="w45">大小</label>
            <span class="pick psize"><select id="d-size"><option>22</option></select><i class="chev" /></span>
            <label for="d-color" class="w50">颜色</label>
            <span class="pick pcolor"><i class="ink" /><select id="d-color"><option>黑</option></select><i class="tri" /></span>
            <label for="d-rot" class="w48">旋转</label>
            <span class="pick prot"><select id="d-rot"><option>0</option></select><i class="chev" /></span>
          </div>
          <div class="row r2">
            <label for="d-lead" class="w82">行距(%)</label>
            <span class="pick plead"><select id="d-lead"><option>&lt;自动&gt;</option></select><i class="chev" /></span>
            <label class="chk c1"><input type="checkbox" />白底</label>
            <label class="chk c2"><input type="checkbox" checked />对齐列</label>
            <label class="chk"><input type="checkbox" />逐字</label>
          </div>
          <div class="row r3">
            <label for="d-tab" class="w40">Tab</label>
            <input id="d-tab" class="num" value="8" />
            <span class="spin"><button aria-label="up"><i class="tri up" /></button><button aria-label="down"><i class="tri" /></button></span>
            <span class="pick palign"><svg viewBox="0 0 18 18"><path d="M0 1h18v2H0zM0 5h12v2H0zM0 8h18v2H0zM0 11h18v2H0zM0 15h12v2H0z" /></svg><select aria-label="align"><option></option></select><i class="chev" /></span>
            <div class="fmts">
              <button v-for="x in formats" :key="x.id" class="sq" :aria-label="x.id"><svg viewBox="0 0 20 20" v-html="x.svg" /></button>
            </div>
          </div>
          <div class="edit">
            <div class="area">
              <textarea ref="editor" v-model="source" aria-label="text" spellcheck="false" />
              <i class="caret" />
            </div>
            <div class="tools">
              <button class="sq" aria-label="symbol"><svg viewBox="0 0 16 16" v-html="icons.dash" /></button>
              <button class="sq sigma">Σ</button>
              <button class="sq var">(<em>x</em>)</button>
            </div>
          </div>
        </div>
        <div class="foot">
          <label for="d-apply">应用到</label>
          <span class="pick papply"><select id="d-apply"><option>图层</option></select><i class="chev" /></span>
          <span class="grow" />
          <button class="btn" disabled>应用</button>
          <button class="btn ok">确定</button>
          <button class="btn">取消</button>
          <button class="btn more" aria-label="collapse"><svg viewBox="0 0 12 16"><path d="M1 7l5-5 5 5M1 14l5-5 5 5" fill="none" stroke="#00f" stroke-width="2" /></svg></button>
        </div>
        <div class="preview"><i /><span>pH</span></div>
      </section>
    </main>

    <footer class="status">
      <span>--</span><span>AU : 开</span><span>柱状图 (User)</span><span>1:[Book1]Sheet1!Col("pH")[1:4]</span><span>1:[Graph2]1!1</span><span>弧度</span>
      <svg class="logo" viewBox="0 0 48 48">
        <defs><radialGradient id="ball" cx="50%" cy="85%" r="80%"><stop offset="0" stop-color="#fbb9a0" /><stop offset=".6" stop-color="#e0603f" /><stop offset="1" stop-color="#f0a890" /></radialGradient></defs>
        <circle cx="24" cy="24" r="22" fill="url(#ball)" stroke="#e04030" stroke-width="2" />
        <path d="M16 12v24M26 10v26M37 12v24M14 15h26M14 25h28M14 35h26" stroke="#f6c8b8" fill="none" />
        <path d="M16 35l5-5 6-15 5 5 5-10" fill="none" stroke="#7f8ba8" stroke-width="2" />
        <g fill="#1c5a9c"><circle cx="16" cy="35" r="2" /><circle cx="21" cy="30" r="2" /><circle cx="27" cy="15" r="2" /><circle cx="32" cy="20" r="2" /><circle cx="37" cy="10" r="2" /></g>
      </svg>
    </footer>
    <div class="taskbar"><i class="search" /><i class="active" /><span>21:50</span></div>
  </div>
</template>

<style>
html, body { margin: 0; background: #fff; }
</style>

<style scoped>
.app {
  --ui: "Open Sans", "Noto Sans CJK SC", sans-serif;
  --song: "Liberation Serif", "Noto Sans CJK SC", serif;
  position: relative; display: flex; flex-direction: column; height: 100vh; overflow: hidden;
  font: 18px var(--ui); color: #000; background: #ebedfb;
}
.app * { box-sizing: border-box; }
button { margin: 0; padding: 0; border: 0; background: none; color: inherit; font: inherit; }
select, input, textarea { font: inherit; color: inherit; margin: 0; border-radius: 0; }
h1, h2, h3 { margin: 0; font-weight: normal; }
svg { display: block; flex: none; }
.tool svg, .vtool svg { overflow: visible; shape-rendering: crispEdges; }
.tri { flex: none; width: 0; height: 0; border: 4px solid transparent; border-top-color: #000; border-bottom: 0; }
.tri.up { border-top: 0; border-bottom: 4px solid #000; }

.titlebar { display: flex; align-items: center; height: 34px; background: #fff; flex: none; }
.logo-sm { width: 24px; height: 26px; margin-left: 2px; }
.titlebar h1 { margin-left: 5px; font-size: 19px; color: #999; flex: 1; }
.winbtns { display: flex; gap: 54px; margin-right: 29px; }
.winbtns svg { width: 16px; height: 16px; }

.menubar { display: flex; align-items: center; height: 33px; flex: none; background: linear-gradient(90deg, #e9ecfb, #f3f6fe); }
.menubar .grip { width: 6px; margin-left: 1px; }
.doc { width: 24px; height: 24px; margin-right: 12px; }
.menu { margin-right: 14px; white-space: pre; line-height: 30px; }
.menu span { font-size: 15px; font-family: "Roboto", sans-serif; }
.mdi { display: flex; gap: 15px; margin: 4px 10px 0 auto; }
.mdi svg { width: 11px; height: 11px; }

.bar { display: flex; height: 33px; flex: none; background: linear-gradient(90deg, #e9ecfb, #f3f6fe); padding-bottom: 1px; }
.group { display: flex; align-items: center; height: 32px; padding-top: 2px; background: linear-gradient(#f7f9fe, #e4e7f2 40%, #bfc0d4); border-bottom: 2px solid #9c9cb6; border-radius: 0 0 0 3px; }
.grip { width: 8px; height: 20px; margin-right: 3px; background: radial-gradient(circle at 5px 2px, #a5a7b4 1px, transparent 2px) 0 0 / 8px 5px; flex: none; }
.sep { width: 8px; height: 24px; background: linear-gradient(#c2c4ce, #c2c4ce) 3px 0 / 1px 100% no-repeat; flex: none; }
.tool { display: flex; align-items: center; justify-content: center; height: 27px; flex: none; }
.tool svg { width: 16px; height: 16px; margin: 0 3px; }
.tool .tri { margin: 0 3px 0 0; }
.tool.on { background: #cfe6f7; border: 1px solid #0078d7; }
.tool.on svg { margin: 0 2px; }
.cap { display: flex; flex-direction: column; align-items: center; justify-content: flex-end; gap: 2px; width: 12px; height: 32px; padding-bottom: 3px; background: linear-gradient(#adadc6, #cfd0e2 50%, #e9eafa); border-radius: 0 4px 0 0; flex: none; }
.dash { width: 5px; height: 1px; background: #000; }
.cap .tri { border-width: 4px 3px 0; }
.combo { display: flex; align-items: center; height: 26px; background: #fff; flex: none; font-size: 16px; }
.combo select, .pick select { flex: 1; min-width: 0; width: 0; height: 100%; padding: 0; border: 0; outline: 0; background: transparent; appearance: none; }
.combo .arr { display: flex; align-items: center; justify-content: center; width: 13px; height: 24px; background: linear-gradient(#e6e8f2, #c2c3d6); }
.combo .arr .tri { border-width: 3px 3px 0; }
.combo.zoom { width: 88px; margin: 0 2px 0 1px; padding-left: 3px; }
.tt { width: 18px; height: 18px; }
.combo.font { width: 188px; margin: 0 7px 0 2px; padding-left: 7px; }
.combo.font select { margin-left: 6px; }
.combo.size { width: 86px; margin-right: 5px; padding-left: 3px; }
.combo.linestyle { width: 89px; margin: 0 5px 0 6px; padding-left: 3px; border: 1px solid #9a9ca8; background: #f0f0f4; color: #6d6d6d; font-size: 17px; }
.combo.linestyle .arr { background: #f0f0f0; }
.stroke { width: 28px; height: 3px; margin-right: 4px; background: #222; }
.combo.width { width: 87px; margin-right: 6px; padding-left: 2px; }
.combo.swatch { width: 50px; margin-right: 3px; background: none; }
.combo.swatch select { height: 16px; border: 1px solid #9a9ca8; background: #dfe2ee; }
.combo.swatch .arr { background: none; }
.combo.gap { width: 86px; margin-right: 5px; padding-left: 3px; }
.combo.angle { width: 90px; height: 28px; margin: 0 1px 0 3px; padding-left: 3px; border: 1px solid #9a9ca8; background: #ececf0; color: #777; }
.combo.angle .arr { background: none; opacity: .6; }

.body { position: relative; display: flex; flex: 1; min-height: 0; padding-top: 1px; }
.left { display: flex; width: 66px; flex: none; }
.sidetabs { display: flex; flex-direction: column; gap: 15px; width: 29px; padding-top: 3px; }
.sidetabs button { width: 27px; height: 102px; padding: 5px 0 0; background: #f0f0f0; border: solid #cfcfd6; border-width: 0 1px 1px 0; writing-mode: vertical-rl; text-orientation: sideways; text-align: left; line-height: 28px; color: #222; font-family: var(--song); font-weight: 300; white-space: pre; }
.sidetabs .t1 { height: 156px; word-spacing: normal; }
.vstack { display: flex; flex-direction: column; align-items: flex-start; }
.vgroup { display: flex; flex-direction: column; width: 25px; background: linear-gradient(90deg, #f6f8fe, #dcdfec 50%, #b4b5cc); border-left: 1px solid #9c9cb6; border-radius: 3px 0 0; }
.vgroup.wide { width: 35px; }
.vgrip { height: 9px; margin-left: 4px; width: 16px; background: radial-gradient(circle at 2px 4px, #a5a7b4 1px, transparent 2px) 0 0 / 5px 9px; }
.vtool { display: flex; align-items: center; gap: 3px; width: 22px; height: 24px; margin-left: 1px; padding-left: 3px; }
.vtool svg { width: 16px; height: 16px; }
.vtool .tri { border-width: 3px 3px 0; }
.vtool.on { background: #cfe6f7; border: 1px solid #0078d7; padding-left: 2px; }
.vcap { display: flex; align-items: center; justify-content: flex-end; height: 12px; margin-top: 1px; padding-right: 3px; background: linear-gradient(90deg, #e9eafa, #b4b5cc); }
.side { width: 7px; height: 7px; background: #000; clip-path: polygon(0 0, 1px 0, 1px 100%, 3px 100%, 3px 0, 7px 50%, 3px 100%, 0 100%); }
.vsep { height: 8px; margin: 0 3px; background: linear-gradient(#c2c4ce, #c2c4ce) 0 4px / 100% 1px no-repeat; }

.centre { display: flex; flex-direction: column; flex: 1; min-width: 0; }
.canvas { flex: 1; min-height: 0; overflow: hidden; background: #c0c0c0; border-top: 1px solid #6e6e6e; border-left: 1px solid #6e6e6e; border-bottom: 1px solid #e0e0e6; }
.paper { width: 1071px; height: 100%; background: #fff; }
.chart { width: 1071px; height: 821px; font-family: "Liberation Serif", serif; }
.chart .sans { font: bold 24px "Liberation Sans", sans-serif; }
.chart .cjk { font-family: "Noto Sans CJK SC", sans-serif; font-weight: 300; }
.lower { padding: 1px 0 0; height: 35px; background: #eceefb; }
.lower .grip { margin-right: 2px; }
.lower .cap { width: 13px; }
.lower .dd svg { margin: 0 2px; }
.right { width: 32px; padding-left: 2px; background: #eef1fd; flex: none; }

.panels { display: flex; flex-direction: column; width: 228px; flex: none; background: #f0f0f0; }
.phead { display: flex; align-items: center; height: 32px; gap: 8px; padding: 0 5px 2px 4px; background: linear-gradient(#bacad9, #d6e4f1); flex: none; }
.phead h2 { flex: 1; font-size: 17px; }
.phead svg { width: 9px; height: 11px; }
.phead .tri { border-width: 5px 5px 0; }
.tree { height: 139px; margin-bottom: 4px; padding-top: 2px; background: #fff; border: 2px solid #6a6a6a; border-right-width: 1px; font: 19px "Liberation Sans", sans-serif; flex: none; }
.node { display: flex; align-items: center; height: 30px; }
.root { background: #0078d7; color: #fff; border: 1px dotted #9cc8f0; }
.minus { width: 18px; height: 18px; border: 1px solid #a0a0a0; background: linear-gradient(#2c4fa0, #2c4fa0) center / 10px 2px no-repeat, #f4f4f4; margin-left: 2px; }
.folder { width: 24px; height: 18px; margin: 0 4px 0 2px; }
.layer { padding-left: 23px; }
.plot { padding-left: 66px; font-weight: bold; }
.tree input, .chk input { display: flex; align-items: center; justify-content: center; appearance: none; width: 23px; height: 23px; margin: 0 3px; border: 1px solid #333; background: #fff; flex: none; }
.tree input:checked::before, .chk input:checked::before { content: ""; width: 15px; height: 11px; background: #333; clip-path: polygon(0 50%, 10% 38%, 35% 70%, 90% 0, 100% 12%, 35% 100%); }
.sw { width: 53px; height: 20px; margin-right: 6px; background: #fbc797; border: 2px solid #000; }
.apps { display: flex; flex: 1; min-height: 0; margin: 1px 0 1px; }
.strip { width: 34px; border-right: 1px solid #8a8a8a; flex: none; }
.navs { width: 34px; height: 68px; }
.vt { position: relative; display: flex; align-items: center; justify-content: center; width: 30px; height: 62px; margin-left: 4px; font-size: 17px; }
.vt svg { position: absolute; inset: 0; width: 100%; height: 100%; }
.vt b, .vt span { position: relative; writing-mode: vertical-rl; text-orientation: sideways; line-height: 26px; }
.vt.cur { z-index: 1; }
.vt:last-child { height: 74px; margin-top: -6px; padding-bottom: 8px; }
.list { flex: 1; overflow: hidden; margin: 2px 0 0; padding-right: 51px; background: #fff; }
.appitem { display: flex; flex-direction: column; align-items: center; height: 113px; line-height: 24px; white-space: nowrap; font-size: 18px; }
.appitem:first-child { margin-top: -17px; }
.appitem svg { width: 48px; height: 48px; margin-bottom: 4px; }
.appitem.dim { color: #6d6d6d; }
.scroll { display: flex; flex-direction: column; align-items: center; width: 24px; margin-right: 4px; padding: 12px 0 11px; flex: none; background: #f0f0f0; }
.scroll svg { width: 14px; height: 9px; }
.scroll i { flex: 414 0 0; margin: 93px 0 0; width: 24px; background: #cdcdcd; }
.scroll svg:last-child { margin-top: 101px; }

.dialog { position: absolute; left: 687px; top: 107px; width: 835px; padding: 0 9px 8px; background: #f0f0f0; border: 1px solid #666; box-shadow: 0 6px 18px rgba(0, 0, 0, .4); font: 300 18px var(--song); }
.dtitle { display: flex; align-items: center; height: 44px; margin: 0 -9px 7px; padding: 0 17px 3px 11px; background: #fff; font: 18px var(--ui); }
.dicon { width: 24px; height: 20px; }
.dtitle h3 { flex: 1; margin-left: 5px; font-size: 18px; }
.dtitle button svg { width: 15px; height: 15px; }
.tabs { display: flex; align-items: flex-end; height: 33px; padding-left: 1px; font: 17px var(--ui); }
.tabs button { height: 31px; padding: 0 6px 4px 7px; border-top: 1px solid #d9d9d9; }
.tabs .cur { position: relative; height: 35px; margin-bottom: -2px; padding: 0 6px 5px; background: #fff; border: 1px solid #d9d9d9; border-bottom: 0; }
.tabs button:last-child { border-right: 1px solid #d9d9d9; }
.panel { height: 382px; padding: 17px 8px 0 12px; background: #fff; border: 1px solid #9aa0a4; }
.row { display: flex; align-items: flex-start; }
.row label { flex: none; line-height: 26px; }
.r1 { height: 40px; }
.r2 { height: 42px; }
.r3 { height: 42px; }
.w55 { width: 55px; }
.w45 { width: 45px; margin-left: 10px; }
.w50 { width: 50px; margin-left: 16px; }
.w48 { width: 48px; margin-left: 16px; }
.w82 { width: 82px; }
.w40 { width: 40px; }
.row label.w40 { line-height: 34px; }
.pick { display: flex; align-items: center; height: 26px; padding: 0 8px 0 4px; background: #fff; border: 1px solid #7a7a7a; flex: none; }
.chev { width: 8px; height: 8px; margin: -5px 2px 0 0; border: solid #444; border-width: 0 1px 1px 0; transform: rotate(45deg); }
.pfont { width: 227px; height: 30px; padding-left: 8px; }
.pfont select { margin-left: 7px; }
.psize { width: 92px; }
.pcolor { width: 153px; height: 24px; margin-top: 1px; padding-right: 5px; padding-left: 4px; background: #e1e1e1; border-color: #adadad; }
.pcolor .tri { border-width: 5px 5px 0; }
.ink { width: 16px; height: 16px; margin-right: 8px; background: #000; border: 1px solid #777; }
.prot { width: 63px; }
.plead { width: 108px; }
.row .chk { display: flex; align-items: center; }
.chk input { width: 20px; height: 20px; margin: 0 5px 0 0; }
.c1 { width: 166px; margin-left: 86px; }
.c2 { width: 174px; }
.num { width: 45px; height: 32px; padding: 0 0 6px 4px; border: 1px solid #7a7a7a; }
.spin { display: flex; flex-direction: column; width: 25px; margin: 1px 19px 0 3px; }
.spin button { display: flex; align-items: center; justify-content: center; height: 15px; background: #f0f0f0; border: 1px solid #adadad; }
.spin .tri { border-left-width: 5px; border-right-width: 5px; }
.palign { width: 59px; height: 30px; margin-right: 25px; padding-left: 6px; }
.palign svg { width: 18px; height: 18px; }
.fmts { display: flex; justify-content: space-between; flex: 1; margin-right: 47px; }
.sq { display: flex; align-items: center; justify-content: center; width: 34px; height: 34px; background: #e1e1e1; border: 1px solid #adadad; flex: none; }
.sq svg { width: 20px; height: 20px; overflow: visible; }
.edit { display: flex; gap: 6px; margin-left: -1px; }
.area { position: relative; flex: 1; display: flex; height: 232px; }
.area textarea { flex: 1; padding: 0 1px; border: 1px solid #646464; outline: 0; resize: none; background: #fff; font: 23px/28px "Liberation Mono", monospace; }
.area textarea::selection { background: #3399ff; color: #fff; }
.caret { position: absolute; left: 140px; top: 1px; width: 2px; height: 28px; background: #000; }
.tools { display: flex; flex-direction: column; justify-content: flex-end; gap: 8px; padding-bottom: 1px; }
.sigma { font-weight: bold; font-size: 28px; }
.var { font-size: 24px; }
.foot { display: flex; align-items: center; height: 30px; margin: 9px 0 11px; }
.foot label { width: 65px; margin-bottom: 4px; line-height: 26px; }
.papply { width: 151px; margin-bottom: 4px; background: #e1e1e1; border-color: #adadad; }
.grow { flex: 1; }
.btn { width: 75px; height: 30px; margin-left: 11px; background: #e1e1e1; border: 1px solid #adadad; }
.btn:disabled { background: #ccc; border-color: #bfbfbf; color: #888; }
.ok { width: 81px; border: 2px solid #0078d7; }
.more { display: flex; align-items: center; justify-content: center; width: 39px; margin-left: 71px; }
.more svg { width: 12px; height: 16px; }
.preview { display: flex; align-items: center; height: 110px; background: #fff; border: 1px solid #646464; }
.preview i { width: 207px; height: 104px; margin-bottom: 3px; background: #fbc797; border: 6px solid #000; }
.preview span { margin: -4px 0 0 18px; font-size: 94px; line-height: 90px; }

.status { position: relative; display: flex; align-items: center; justify-content: flex-end; height: 29px; flex: none; background: #f0f0f0; border-top: 1px solid #d2d2dc; font-size: 16px; }
.status > span { padding: 0 4px; border-left: 1px solid #d2d2d2; white-space: nowrap; }
.status > span:last-of-type { padding-right: 1px; font-size: 17px; }
.logo { position: absolute; left: 0; bottom: 0; width: 48px; height: 47px; }
.taskbar { display: flex; height: 10px; overflow: hidden; background: #cbdde4; flex: none; }
.search { width: 428px; margin: 0 0 0 74px; background: #fff; border: 2px solid #c6c8ca; border-bottom: 0; }
.active { width: 73px; margin-left: 529px; background: #e6f0f4; }
.taskbar span { margin-left: 655px; font-size: 16px; line-height: 26px; }
</style>
